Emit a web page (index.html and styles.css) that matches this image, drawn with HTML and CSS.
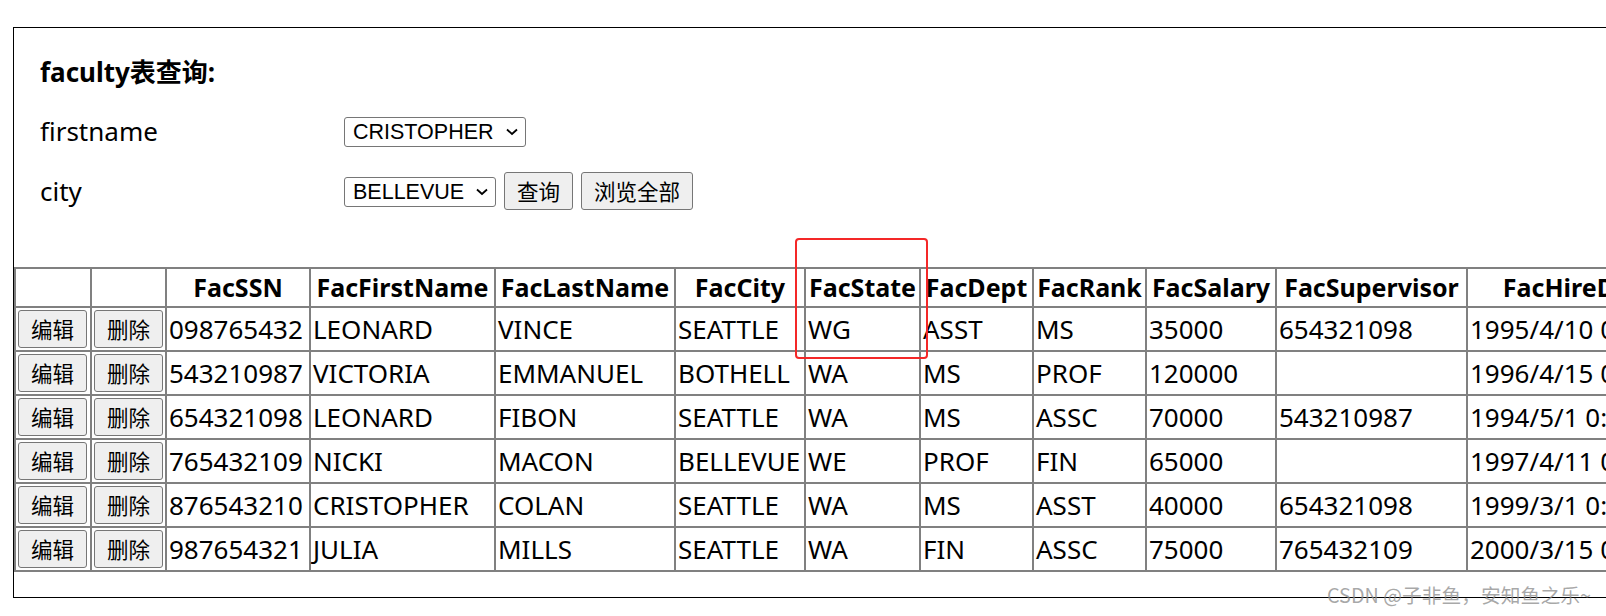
FILE: index.html
```html
<!DOCTYPE html>
<html lang="zh-CN">
<head>
<meta charset="utf-8">
<title>faculty表查询</title>
<link rel="stylesheet" href="styles.css">
</head>
<body>
<div class="frame">
  <form class="query">
    <h4 class="title">faculty表查询:</h4>
    <div class="row">
      <label class="label">firstname</label>
      <div class="controls">
        <span class="sel-wrap">
          <select class="sel sel-name"><option>CRISTOPHER</option></select>
          <svg class="chev" width="12" height="8" viewBox="0 0 12 8"><path d="M1 1.5 L6 6 L11 1.5" fill="none" stroke="#000" stroke-width="1.8"/></svg>
        </span>
      </div>
    </div>
    <div class="row">
      <label class="label">city</label>
      <div class="controls">
        <span class="sel-wrap">
          <select class="sel sel-city"><option>BELLEVUE</option></select>
          <svg class="chev" width="12" height="8" viewBox="0 0 12 8"><path d="M1 1.5 L6 6 L11 1.5" fill="none" stroke="#000" stroke-width="1.8"/></svg>
        </span>
        <button type="button" class="btn">查询</button>
        <button type="button" class="btn">浏览全部</button>
      </div>
    </div>
  </form>
  <table class="grid">
    <colgroup>
      <col class="w1"><col class="w2"><col class="w3"><col class="w4"><col class="w5"><col class="w6">
      <col class="w7"><col class="w8"><col class="w9"><col class="w10"><col class="w11"><col class="w12"><col class="w13">
    </colgroup>
    <thead>
      <tr><th></th><th></th><th>FacSSN</th><th>FacFirstName</th><th>FacLastName</th><th>FacCity</th><th>FacState</th><th>FacDept</th><th>FacRank</th><th>FacSalary</th><th>FacSupervisor</th><th>FacHireDate</th><th>FacZipCode</th></tr>
    </thead>
    <tbody>
      <tr><td><button type="button" class="btn cell-btn">编辑</button></td><td><button type="button" class="btn cell-btn">删除</button></td><td>098765432</td><td>LEONARD</td><td>VINCE</td><td>SEATTLE</td><td>WG</td><td>ASST</td><td>MS</td><td>35000</td><td>654321098</td><td>1995/4/10 0:00:00</td><td>98111-9921</td></tr>
      <tr><td><button type="button" class="btn cell-btn">编辑</button></td><td><button type="button" class="btn cell-btn">删除</button></td><td>543210987</td><td>VICTORIA</td><td>EMMANUEL</td><td>BOTHELL</td><td>WA</td><td>MS</td><td>PROF</td><td>120000</td><td></td><td>1996/4/15 0:00:00</td><td>98011-2242</td></tr>
      <tr><td><button type="button" class="btn cell-btn">编辑</button></td><td><button type="button" class="btn cell-btn">删除</button></td><td>654321098</td><td>LEONARD</td><td>FIBON</td><td>SEATTLE</td><td>WA</td><td>MS</td><td>ASSC</td><td>70000</td><td>543210987</td><td>1994/5/1 0:00:00</td><td>98121-0094</td></tr>
      <tr><td><button type="button" class="btn cell-btn">编辑</button></td><td><button type="button" class="btn cell-btn">删除</button></td><td>765432109</td><td>NICKI</td><td>MACON</td><td>BELLEVUE</td><td>WE</td><td>PROF</td><td>FIN</td><td>65000</td><td></td><td>1997/4/11 0:00:00</td><td>98015-9945</td></tr>
      <tr><td><button type="button" class="btn cell-btn">编辑</button></td><td><button type="button" class="btn cell-btn">删除</button></td><td>876543210</td><td>CRISTOPHER</td><td>COLAN</td><td>SEATTLE</td><td>WA</td><td>MS</td><td>ASST</td><td>40000</td><td>654321098</td><td>1999/3/1 0:00:00</td><td>98114-1332</td></tr>
      <tr><td><button type="button" class="btn cell-btn">编辑</button></td><td><button type="button" class="btn cell-btn">删除</button></td><td>987654321</td><td>JULIA</td><td>MILLS</td><td>SEATTLE</td><td>WA</td><td>FIN</td><td>ASSC</td><td>75000</td><td>765432109</td><td>2000/3/15 0:00:00</td><td>98114-9954</td></tr>
    </tbody>
  </table>
</div>
<div class="mark-box"></div>
<div class="watermark">CSDN @子非鱼，安知鱼之乐~</div>
</body>
</html>
```

FILE: styles.css
```css
body {
  margin: 13px 0 0 13px;
  font-family: "Noto Sans", "Noto Sans CJK SC", sans-serif;
  font-size: 26px;
  color: #000;
  background: #fff;
  overflow: hidden;
}
.frame {
  width: max-content;
  margin-top: 14px;
  border: 1px solid #000;
  padding: 0 0 25px 0;
}
.query {
  padding: 26px 0 0 26px;
  margin: 0 0 56px 0;
}
.title {
  margin: 0 0 21px 0;
  font-size: 26px;
  line-height: 36px;
  font-weight: bold;
}
.row {
  display: grid;
  grid-template-columns: 304px auto;
  align-items: center;
  height: 40px;
}
.row + .row {
  margin-top: 20px;
}
.label {
  line-height: 36px;
}
.controls {
  display: flex;
  align-items: center;
  gap: 8px;
}
.sel-wrap {
  position: relative;
  display: block;
}
.sel {
  display: block;
  -webkit-appearance: none;
  appearance: none;
  font-family: "Liberation Sans", Arial, sans-serif;
  font-size: 21.5px;
  height: 30px;
  border: 1px solid #767676;
  border-radius: 3px;
  background: #fff;
  color: #000;
  padding: 0 0 0 8px;
  margin: 0;
}
.sel-name { width: 182px; margin-top: 2px; }
.sel-city { width: 152px; margin-top: 1px; }
.chev {
  position: absolute;
  right: 8px;
  top: 50%;
  margin-top: -3px;
  pointer-events: none;
}
.btn {
  font-family: "Noto Sans CJK SC", sans-serif;
  font-size: 21.5px;
  height: 38px;
  padding: 0 12px;
  border: 1px solid #767676;
  border-radius: 3px;
  background: #efefef;
  color: #000;
  line-height: 1;
}
.grid {
  border-collapse: separate;
  border-spacing: 0;
  border: 1px solid #808080;
  white-space: nowrap;
}
.grid th,
.grid td {
  border: 1px solid #808080;
  padding: 2px 2px;
  vertical-align: middle;
}
.grid th {
  font-size: 25px;
  font-weight: bold;
  line-height: 33px;
  text-align: center;
}
.grid td {
  line-height: 34px;
  text-align: left;
}
.cell-btn {
  width: 69px;
  padding: 0;
  display: block;
}
.w1 { width: 76px; }
.w2 { width: 75px; }
.w3 { width: 144px; }
.w4 { width: 185px; }
.w5 { width: 180px; }
.w6 { width: 130px; }
.w7 { width: 115px; }
.w8 { width: 113px; }
.w9 { width: 113px; }
.w10 { width: 130px; }
.w11 { width: 191px; }
.mark-box {
  position: absolute;
  left: 795px;
  top: 238px;
  width: 129px;
  height: 117px;
  border: 2px solid #f42828;
  border-radius: 4px;
}
.watermark {
  position: absolute;
  left: 1327px;
  top: 582px;
  font-family: "Noto Sans CJK SC", sans-serif;
  font-size: 19.8px;
  line-height: 26px;
  color: rgba(140, 140, 140, 0.75);
  white-space: nowrap;
}
```
